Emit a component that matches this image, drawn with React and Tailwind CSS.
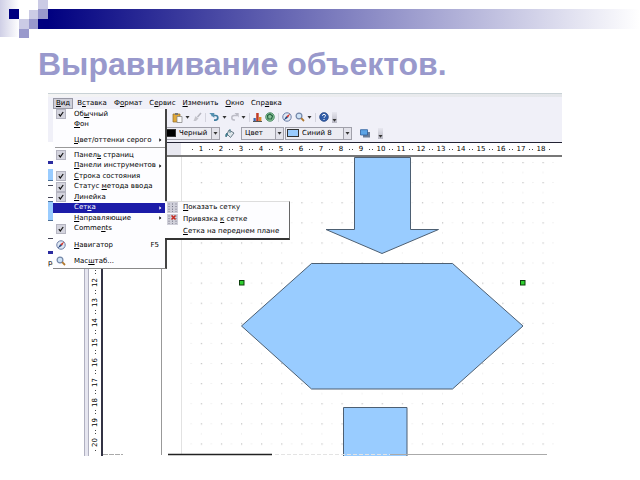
import { useState } from 'react'
import { clsx } from 'clsx'

const menus = [
  ['В', 'с', 'тавка'],
  ['Ф', 'о', 'рмат'],
  ['С', 'е', 'рвис'],
  ['', 'И', 'зменить'],
  ['', 'О', 'кно'],
  ['Спр', 'а', 'вка'],
]

const toolbars = [
  { label: ['Панел', 'ь', ' страниц'], checked: true },
  { label: ['', 'П', 'анели инструментов'], arrow: true },
  { label: ['', 'С', 'трока состояния'], checked: true },
  { label: ['Статус ', 'м', 'етода ввода'], checked: true },
  { label: ['', 'Л', 'инейка'], checked: true },
  { label: ['Сет', 'к', 'а'], arrow: true, active: true },
  { label: ['', 'Н', 'аправляющие'], arrow: true },
  { label: ['Comme', 'n', 'ts'], checked: true },
]

const hMarks = Array.from({ length: 18 }, (_, i) => i + 1)
const vMarks = Array.from({ length: 14 }, (_, i) => i + 7)

function Label({ parts }) {
  return <span className="whitespace-pre">{parts[0]}<u>{parts[1]}</u>{parts[2]}</span>
}

function Caret({ className }) {
  return (
    <svg width="5" height="3" viewBox="0 0 5 3" className={clsx('shrink-0', className)}>
      <path d="M0.5 0h4L2.5 2.8z" fill="#333"/>
    </svg>
  )
}

function MenuItem({ label, checked, arrow, active, icon, hint, children }) {
  const [on, setOn] = useState(!!checked)
  const row = clsx('relative flex h-full min-h-[10px] w-full items-center pl-[3px] pr-[3px] text-left', active && 'bg-[#1c1ca8] text-white')

  if (checked !== undefined) {
    return (
      <label className={row}>
        <span className="mr-[8px] grid h-[10px] w-[10px] shrink-0 place-items-center">
          <input type="checkbox" checked={on} onChange={() => setOn(!on)}
            className="col-start-1 row-start-1 h-[10px] w-[10px] appearance-none border border-[#b4b4c0] bg-[#d4d4de]"/>
          {on && (
            <svg width="6" height="6" viewBox="0 0 6 6" className="pointer-events-none col-start-1 row-start-1">
              <path d="M0.8 3.2l1.5 1.8L5.2 1" fill="none" stroke="#111" strokeWidth="1.2"/>
            </svg>
          )}
        </span>
        <Label parts={label}/>
      </label>
    )
  }

  return (
    <div className="relative">
      <button type="button" className={row}>
        <span className="mr-[8px] grid w-[10px] shrink-0 place-items-center">{icon}</span>
        <Label parts={label}/>
        {hint && <span className="ml-auto pr-[3px]">{hint}</span>}
        {arrow && (
          <svg width="3" height="4" viewBox="0 0 3 4" className="ml-auto shrink-0">
            <path d="M0.3 0.3v3.4L2.4 2z" fill="currentColor"/>
          </svg>
        )}
      </button>
      {children}
    </div>
  )
}

function Compass() {
  return (
    <svg width="10" height="10" viewBox="0 0 9 9">
      <circle cx="4.5" cy="4.5" r="3.8" fill="#dfe8f4" stroke="#6c7ea6" strokeWidth="0.9"/>
      <path d="M7.4 1.4L5.4 5.2 3.8 3.8z" fill="#d3352b"/>
      <path d="M1.6 7.4L3.8 3.8 5.4 5.2z" fill="#23417c"/>
    </svg>
  )
}

function Magnifier() {
  return (
    <svg width="10" height="10" viewBox="0 0 10 10">
      <circle cx="4" cy="4" r="2.9" fill="#cfe3f6" stroke="#7386a8" strokeWidth="1.2"/>
      <path d="M6.2 6.2l2.8 2.8" stroke="#b0782e" strokeWidth="1.8"/>
    </svg>
  )
}

function GridIcon({ snap }) {
  return (
    <svg width="11" height="11" viewBox="0 0 11 11">
      <rect width="11" height="11" fill="#cfcfd9"/>
      <path d="M2 1.5v8.5M5.5 1.5v8.5M9 1.5v8.5" stroke="#6b6b7c" strokeDasharray="1 1.6"/>
      {snap && <path d="M4.5 1.5l4 4M8.5 1.5l-4 4" stroke="#c8281e" strokeWidth="1.5"/>}
    </svg>
  )
}

function SubMenu() {
  return (
    <div className="absolute left-full top-[-2px] z-20 flex w-[125px] flex-col border-b-2 border-r border-t border-b-[#333] border-r-[#666] border-t-[#ddd] bg-[#fdfdff] text-black">
      <SubItem icon={<GridIcon/>} label={['', 'П', 'оказать сетку']}/>
      <SubItem icon={<GridIcon snap/>} label={['Привязка ', 'к', ' сетке']}/>
      <SubItem label={['', 'С', 'етка на переднем плане']}/>
    </div>
  )
}

function SubItem({ icon, label }) {
  return (
    <button type="button" className="flex h-[12px] items-center pl-[2px] text-left">
      <span className="mr-[5px] w-[11px] shrink-0">{icon}</span>
      <Label parts={label}/>
    </button>
  )
}

function ViewMenu() {
  return (
    <div className="absolute left-0 top-full z-10 flex w-[114px] flex-col border-b border-r-2 border-b-[#888] border-r-[#444] bg-[#fdfdff] pb-[2px]">
      <MenuItem label={['Об', 'ы', 'чный']} checked/>
      <MenuItem label={['', 'Ф', 'он']}/>
      <div className="mt-[6px]">
        <MenuItem label={['', 'Ц', 'вет/оттенки серого']} arrow/>
      </div>
      <hr className="my-[2px] ml-[2px] border-[#999]"/>
      <div className="grid h-[84px] auto-rows-fr">
        {toolbars.map(item => (
          <MenuItem key={item.label.join('')} {...item}>
            {item.active && <SubMenu/>}
          </MenuItem>
        ))}
      </div>
      <div className="mt-[6px] flex flex-col gap-[6px]">
        <MenuItem label={['', 'Н', 'авигатор']} icon={<Compass/>} hint="F5"/>
        <MenuItem label={['Мас', 'ш', 'таб...']} icon={<Magnifier/>}/>
      </div>
    </div>
  )
}

function Tool({ label, caret, children }) {
  return (
    <button type="button" aria-label={label} className="flex items-center gap-[2px]">
      {children}
      {caret && <Caret/>}
    </button>
  )
}

function Divider() {
  return <span className="h-[9px] w-px bg-[#d4d4de]"/>
}

function StandardBar() {
  return (
    <div className="flex h-[14px] items-center gap-[3px] pl-[124px]">
      <Tool label="Вставить" caret>
        <svg width="11" height="11" viewBox="0 0 11 11">
          <path d="M1 2h7v8H1z" fill="#e0a83a" stroke="#8d6a28" strokeWidth="0.7"/>
          <path d="M3 1h3v2H3z" fill="#777"/>
          <path d="M5 4.5h5v6H5z" fill="#fafafa" stroke="#7c7c7c" strokeWidth="0.7"/>
        </svg>
      </Tool>
      <Tool label="Копировать формат">
        <svg width="9" height="10" viewBox="0 0 9 10">
          <path d="M8 1L4.5 5" stroke="#b5b5be" strokeWidth="1.5"/>
          <path d="M2.5 4l3 2.5L3 9H0.5z" fill="#c5c5cd"/>
        </svg>
      </Tool>
      <Divider/>
      <Tool label="Отменить" caret>
        <svg width="11" height="10" viewBox="0 0 11 10">
          <path d="M2.5 3.5h4a2.3 2.3 0 010 4.6H5" fill="none" stroke="#3f7ea0" strokeWidth="1.7"/>
          <path d="M0.3 1h5v5z" fill="#5490b0"/>
        </svg>
      </Tool>
      <Tool label="Вернуть" caret>
        <svg width="9" height="10" viewBox="0 0 9 10">
          <path d="M7 3.5H4a2.2 2.2 0 000 4.4h1" fill="none" stroke="#bcbcc6" strokeWidth="1.5"/>
          <path d="M8.7 1H4.5l4.2 4.5z" fill="#bcbcc6"/>
        </svg>
      </Tool>
      <Divider/>
      <Tool label="Диаграмма">
        <svg width="9" height="10" viewBox="0 0 9 10">
          <path d="M0.5 6h2.3v3H0.5z" fill="#3e66b0"/>
          <path d="M3.2 1h2.5v8H3.2z" fill="#c23a22"/>
          <path d="M6 5h2.4v4H6z" fill="#dc8b28"/>
          <path d="M0 9.5h9" stroke="#555"/>
        </svg>
      </Tool>
      <Tool label="Гиперссылка">
        <svg width="10" height="10" viewBox="0 0 10 10">
          <circle cx="5" cy="5" r="4.3" fill="#8cc49a" stroke="#3b8056" strokeWidth="0.8"/>
          <path d="M2.5 3.5L5 2l2.5 2-1 3L3 7z" fill="none" stroke="#246240" strokeWidth="1.2"/>
        </svg>
      </Tool>
      <Divider/>
      <Tool label="Навигатор"><Compass/></Tool>
      <Tool label="Масштаб" caret><Magnifier/></Tool>
      <Divider/>
      <Tool label="Справка">
        <svg width="10" height="10" viewBox="0 0 10 10">
          <circle cx="5" cy="5" r="4.4" fill="#2f5ca8" stroke="#1d3c78" strokeWidth="0.6"/>
          <path d="M3.5 3.8a1.5 1.5 0 113 0c0 1-1.5 1-1.5 2M5 7v1" fill="none" stroke="#fff" strokeWidth="1"/>
        </svg>
      </Tool>
      <Overflow/>
    </div>
  )
}

function Overflow() {
  return (
    <button type="button" aria-label="Другие кнопки" className="flex h-[11px] w-[5px] items-end justify-center bg-linear-to-b from-[#e8e8f0] to-[#b8b8c4] pb-[1px]">
      <Caret/>
    </button>
  )
}

function Picker({ label, value, swatch, className }) {
  return (
    <div className={clsx('flex h-[13px] items-center border border-[#a0a0aa] bg-[#ececf2]', className)}>
      {swatch && <span className={clsx('ml-px h-[8px] w-[12px] shrink-0 border border-[#333]', swatch)}/>}
      <select aria-label={label} defaultValue={value} className="h-full min-w-0 flex-1 appearance-none bg-transparent pl-[3px] leading-[11px] outline-none">
        <option>{value}</option>
      </select>
      <span className="grid h-full w-[8px] shrink-0 place-items-center border-l border-[#a0a0aa] bg-[#e2e2ea]"><Caret/></span>
    </div>
  )
}

function DrawingBar() {
  return (
    <div className="flex h-[18px] items-center pl-[114px]">
      <Picker label="Линия" value="Черный" swatch="bg-black" className="w-[58px]"/>
      <button type="button" aria-label="Область" className="mx-[5px]">
        <svg width="11" height="11" viewBox="0 0 11 11">
          <path d="M4 2l5 3-3.5 4.5L2 6z" fill="#dfe6ea" stroke="#5b6f7c" strokeWidth="0.9"/>
          <path d="M5 5V1M2 5c-1.5 1-1.5 3-1 4l1.5-2z" fill="#42899c" stroke="#3a6f80" strokeWidth="0.8"/>
        </svg>
      </button>
      <Picker label="Тип" value="Цвет" className="w-[43px]"/>
      <Picker label="Заливка" value="Синий 8" swatch="bg-[#99ccff]" className="ml-[1px] w-[67px]"/>
      <button type="button" aria-label="Тень" className="mx-[8px]">
        <svg width="10" height="9" viewBox="0 0 10 9">
          <path d="M3 3h7v5.5H3z" fill="#6b7c96"/>
          <path d="M0.5 0.7h7v5.3h-7z" fill="#5ca4e6" stroke="#2d5f9c" strokeWidth="0.8"/>
        </svg>
      </button>
      <Overflow/>
    </div>
  )
}

function SlidePanel() {
  return (
    <div className="w-[36px] shrink-0 bg-white pt-[19px]">
      <div className="h-[3px] w-[6px] bg-[#2b2ba0]"/>
      <div className="mt-[5px] h-[12px] w-[6px] border-b border-[#4a6f98] bg-[#99ccff]"/>
      <div className="mt-[4px] h-[13px] w-[6px] border-y border-r border-[#445]"/>
      <div className="mt-[3px] h-[20px] w-[6px] border-y border-[#4a6f98] bg-[#99ccff]"/>
      <div className="mt-[17px] h-[1px] w-[6px] bg-[#445]"/>
      <div className="mt-[12px] h-[3px] w-[6px] bg-[#2b2ba0]"/>
      <p className="mt-[4px] leading-[10px]">ра</p>
    </div>
  )
}

function HorizontalRuler() {
  return (
    <div className="flex h-[15px] overflow-hidden border-b-2 border-t border-b-[#777] border-t-[#223] bg-white leading-[12px]">
      <div className="w-[92px] shrink-0 bg-[#e8e8f0]"/>
      <div className="flex min-w-0 flex-1 overflow-hidden pl-[10px]">
        {hMarks.map(n => (
          <div key={n} className="flex w-5 shrink-0 items-center justify-between px-px">
            <i className="h-px w-px bg-[#444]"/>
            <span>{n}</span>
            <i className="h-px w-px bg-[#444]"/>
          </div>
        ))}
      </div>
    </div>
  )
}

function VerticalRuler() {
  return (
    <div className="flex w-[14px] shrink-0 flex-col border-r-2 border-[#334] bg-white pt-[15px]">
      {vMarks.map(n => (
        <div key={n} className="flex h-5 flex-col items-center justify-between py-px leading-[12px]">
          <i className="h-px w-px bg-[#444]"/>
          <span className="rotate-180 [writing-mode:vertical-rl]">{n}</span>
          <i className="h-px w-px bg-[#444]"/>
        </div>
      ))}
    </div>
  )
}

function Canvas() {
  return (
    <svg className="h-[299px] min-w-0 flex-1 bg-white">
      <defs>
        <pattern id="dots" x="138" y="5" width="20.1" height="20.1" patternUnits="userSpaceOnUse">
          <path d="M0 0h1.2v1.2H0z" fill="#bdbdbd"/>
          <path d="M10 0h1v1h-1zM0 10h1v1H0z" fill="#e6e6e6"/>
        </pattern>
      </defs>
      <rect x="86" y="0" width="100%" height="296" fill="url(#dots)"/>
      <path d="M58.5 0v298" stroke="#999"/>
      <path d="M78.5 0v298" stroke="#e2e2e2"/>

      <g fill="#99ccff" stroke="#4d5f72" strokeWidth="1">
        <path d="M251.5 0.5h56v72h28L279 96.5l-56-24h28.5z"/>
        <path d="M208.5 106.5h141l70.5 62.5-70.5 63h-141l-70-63z"/>
        <path d="M240.5 250.5h63.5v60h-63.5z"/>
      </g>

      {/* selection handles */}
      <g fill="#2fcf2f" stroke="#0d3d0d" strokeWidth="1">
        <rect x="136.5" y="123.5" width="4.5" height="4.5"/>
        <rect x="417.5" y="123.5" width="4.5" height="4.5"/>
      </g>

      <path d="M0 297.5h20" stroke="#aaa" strokeDasharray="5 1"/>
      <path d="M65 297.5h104" stroke="#222" strokeWidth="1.5"/>
      <path d="M172 297.5h115" stroke="#e4e4e4" strokeDasharray="4 2"/>
      <path d="M287 297.5h157" stroke="#aaa"/>
    </svg>
  )
}

export default function App() {
  return (
    <div className="min-h-screen overflow-hidden bg-white font-['Liberation_Sans',sans-serif]">
      <header className="flex">
        <svg width="48" height="38" viewBox="0 0 48 38" className="shrink-0" shapeRendering="crispEdges">
          <defs>
            <linearGradient id="fade">
              <stop offset="0" stopColor="#cfcfe6"/>
              <stop offset="1" stopColor="#ffffff"/>
            </linearGradient>
          </defs>
          <rect width="19" height="37" fill="url(#fade)"/>
          <rect x="9" y="9" width="10" height="10" fill="#000080"/>
          <rect x="38" y="19" width="10" height="10" fill="#000080"/>
          <path d="M38 0h10v9H38zM29 10h9v9h-9zM19 19h10v10H19z" fill="#cbcbe5"/>
          <path d="M38 9h10v10H38zM29 19h9v10h-9zM19 29h10v9H19z" fill="#9999cc"/>
        </svg>
        <div className="mt-[9px] h-5 flex-1 bg-linear-to-r/srgb from-[#000080] via-[#9999cc] via-60% to-white"/>
      </header>

      <h1 className="ml-[38px] mt-[7px] text-[32px] font-bold leading-[38px] text-[#9999cc]">Выравнивание объектов.</h1>

      <main className="ml-12 mr-[78px] mt-[10px] bg-[#f0f0f8] font-['DejaVu_Sans',sans-serif] text-[7px] leading-[9px] text-black">
        <div className="h-[4px] border-t border-[#c9d2d6] bg-linear-to-r from-[#f4f4f4] to-[#e4e6ea]"/>

        <nav className="flex h-[13px] items-center gap-[7px] pl-[5px]">
          <div className="relative -mr-[3px] h-[11px]">
            <button type="button" className="h-full border border-[#9a9aa6] bg-[#d0d0da] px-[2px]">
              <Label parts={['', 'В', 'ид']}/>
            </button>
            <ViewMenu/>
          </div>
          {menus.map(parts => (
            <button type="button" key={parts.join('')}><Label parts={parts}/></button>
          ))}
        </nav>

        <StandardBar/>
        <DrawingBar/>

        <div className="flex">
          <SlidePanel/>
          <div className="w-[5px] shrink-0 border-x border-[#b0b0c0] bg-[#e6e6f0]"/>
          <div className="min-w-0 flex-1">
            <HorizontalRuler/>
            <div className="flex">
              <VerticalRuler/>
              <Canvas/>
            </div>
          </div>
        </div>
      </main>
    </div>
  )
}
